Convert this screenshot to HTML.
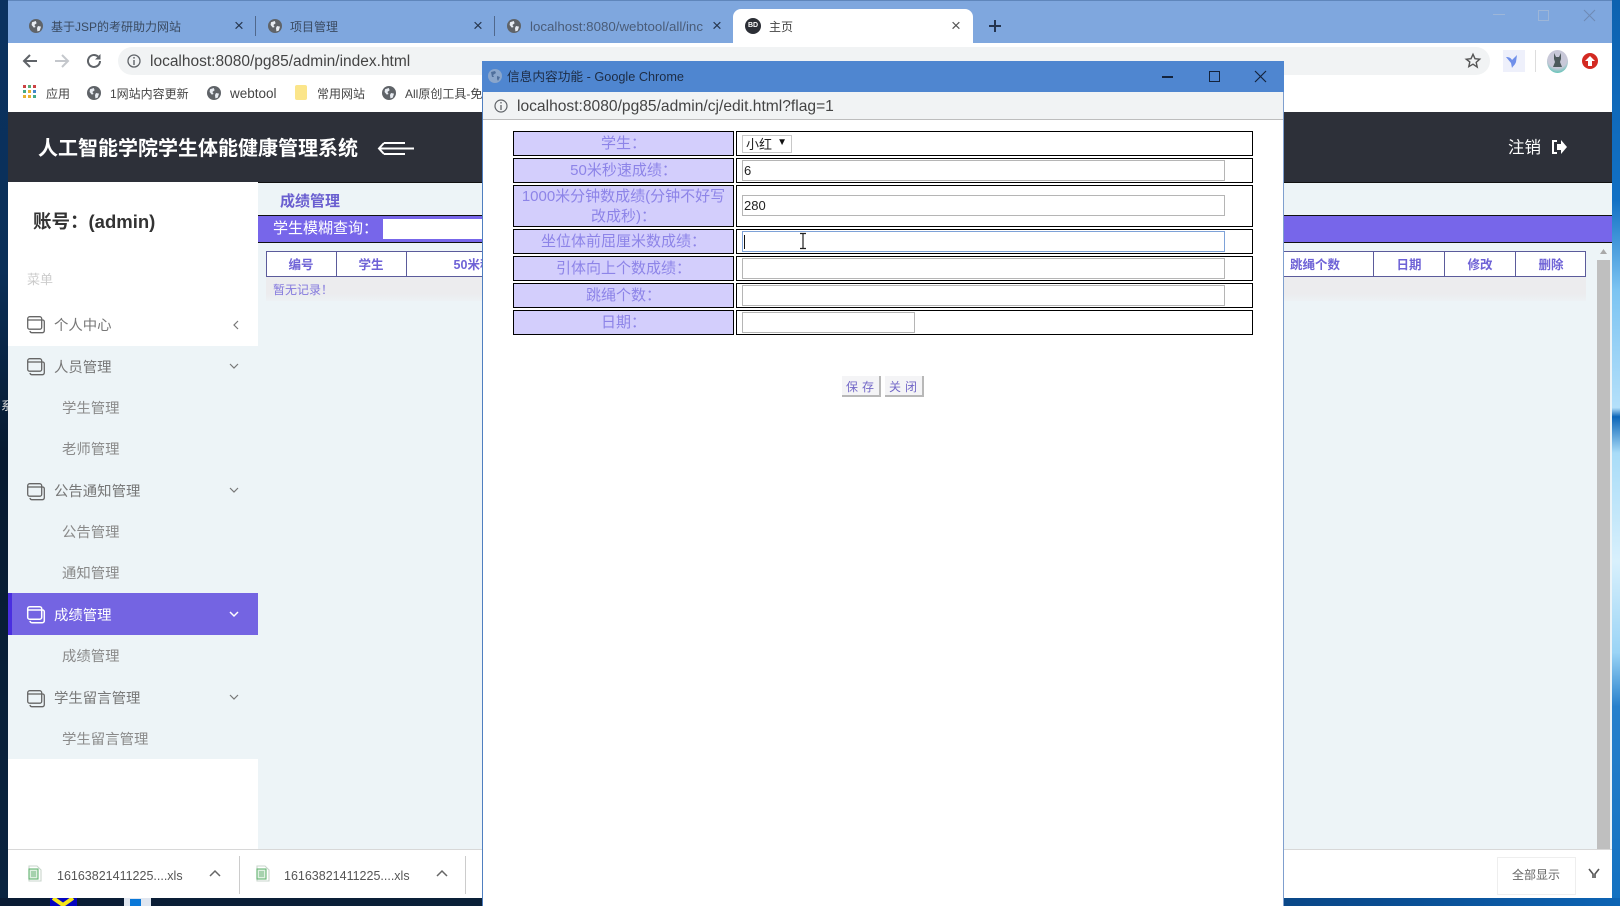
<!DOCTYPE html>
<html lang="zh"><head><meta charset="utf-8"><title>主页</title>
<style>
*{box-sizing:border-box}
html,body{margin:0;padding:0;width:1620px;height:906px;overflow:hidden;background:#0a2a50}
body{font-family:"Liberation Sans","Noto Sans CJK SC",sans-serif;position:relative}
#w{position:absolute;left:0;top:0;width:1620px;height:906px;filter:blur(.35px)}
.a,.t{position:absolute}
.t{white-space:nowrap;line-height:1}
svg{position:absolute;overflow:visible}
.tab{font-size:12px;color:#3a4a60}
.bm{font-size:12px;color:#444}
.m{left:54px;font-size:14.4px;color:#777}
.s{left:62px;font-size:14.4px;color:#8a8a8a}
.th{font-size:12.5px;font-weight:bold;color:#6e62d6;transform:translateX(-50%)}
.lb{position:absolute;left:513px;width:221px;background:#d3cefc;border:1.5px solid #000;color:#8d84e8;font-size:15px;text-align:center;display:flex;align-items:center;justify-content:center;line-height:20px;padding:1px 2px 0 2px}
.rc{position:absolute;left:736px;width:517px;background:#fff;border:1.5px solid #000}
.in{position:absolute;left:742px;width:483px;height:21px;background:#fff;border:1px solid #b5b5b5;font-size:13px;color:#222;padding:3px 0 0 1px;line-height:14px}
.dl{font-size:12.5px;color:#555}
.x{font-size:17px;color:#27374f}
</style></head><body><div id="w">
<svg width="0" height="0" style="position:absolute"><defs>
<g id="g"><circle cx="7" cy="7" r="7" fill="#5f6368"/><path d="M3 3.2 6.8 2 7.6 4.2 5.4 6 6.6 8 4.8 8.6 2.6 6ZM9 7l3 .6-1.2 4L8.4 12.4 8 9Z" fill="#e8ecf2"/></g>
<g id="mi" fill="none" stroke="#666" stroke-width="1.3"><rect x=".7" y=".7" width="14" height="12.5" rx="2"/><path d="M1 4h13.5"/><path d="M15 4h.6a1.7 1.7 0 0 1 1.7 1.7v9a2 2 0 0 1-2 2H5a2 2 0 0 1-2-1.8" /></g>
<g id="miw" fill="none" stroke="#fff" stroke-width="1.5"><rect x=".7" y=".7" width="14" height="12.5" rx="2"/><path d="M1 4h13.5"/><path d="M15 4h.6a1.7 1.7 0 0 1 1.7 1.7v9a2 2 0 0 1-2 2H5a2 2 0 0 1-2-1.8"/></g>
<g id="xls" fill="none" stroke="#6cb57a" stroke-width="1.1"><path d="M1 1h8l4 4v11H1Z" stroke="#c9d6cc"/><rect x="1" y="4" width="9" height="10" fill="#dff0e2" stroke="#65b473"/><path d="M3 7h5M3 9h5M3 11h5"/></g>
</defs></svg>

<!-- desktop edges -->
<div class="a" style="left:0;top:0;width:8px;height:906px;background:linear-gradient(180deg,#0b3260 0,#0a2f58 30%,#071a30 50%,#0a2440 100%)"></div>
<div class="a" style="left:1612px;top:0;width:8px;height:906px;background:linear-gradient(180deg,#0d62b0 0,#1170c4 22%,#7cc4f2 32%,#b4e0fa 45%,#0c66b8 46%,#a8dcf8 50%,#d8f0fc 62%,#9ad4f6 72%,#2680cc 78%,#1270c0 100%)"></div>
<div class="a" style="left:0;top:898px;width:1620px;height:8px;background:linear-gradient(90deg,#0a1c34,#0a2038 30%,#06294f 40%,#0a4c90 85%,#0d64b4)"></div>
<div class="a" style="left:50px;top:898px;width:27px;height:8px;background:#0505c0"></div>
<svg style="left:52px;top:898px" width="22" height="8"><path d="M1 0 11 7 21 0" fill="none" stroke="#f5e61a" stroke-width="4"/></svg>
<div class="a" style="left:124px;top:898px;width:27px;height:8px;background:#dfe6f0"></div>
<div class="a" style="left:130px;top:899px;width:11px;height:7px;background:#0a78d8"></div>

<!-- browser -->
<div class="a" style="left:8px;top:0;width:1604px;height:898px;background:#fff"></div>
<div class="a" style="left:8px;top:0;width:1604px;height:43px;background:#7fa7de;border-top:1px solid #5f86bb"></div>

<!-- tabs -->
<svg style="left:29px;top:19px" width="14" height="14"><use href="#g"/></svg>
<div class="t tab" style="left:51px;top:21px">基于JSP的考研助力网站</div>
<div class="t x" style="left:234px;top:17px">×</div>
<div class="a" style="left:255px;top:16px;width:1px;height:20px;background:#50688c"></div>
<svg style="left:268px;top:19px" width="14" height="14"><use href="#g"/></svg>
<div class="t tab" style="left:290px;top:21px">项目管理</div>
<div class="t x" style="left:473px;top:17px">×</div>
<div class="a" style="left:494px;top:16px;width:1px;height:20px;background:#50688c"></div>
<svg style="left:507px;top:19px" width="14" height="14"><use href="#g"/></svg>
<div class="t tab" style="left:530px;top:20px;width:175px;overflow:hidden;color:#4a5c78;font-size:13.3px">localhost:8080/webtool/all/inc</div>
<div class="t x" style="left:712px;top:17px">×</div>
<div class="a" style="left:733px;top:9px;width:240px;height:36px;background:#fff;border-radius:8px 8px 0 0"></div>
<div class="a" style="left:745px;top:18px;width:16px;height:16px;border-radius:50%;background:#2c2f36;color:#fff;font-size:7px;font-weight:bold;text-align:center;line-height:16px">BD</div>
<div class="t tab" style="left:769px;top:21px;color:#444">主页</div>
<div class="t x" style="left:951px;top:17px;color:#555">×</div>
<svg style="left:988px;top:19px" width="14" height="14"><path d="M7 1v12M1 7h12" stroke="#24344f" stroke-width="2"/></svg>
<!-- window controls -->
<div class="a" style="left:1493px;top:14px;width:12px;height:1px;background:#9db6d8"></div>
<div class="a" style="left:1538px;top:10px;width:11px;height:11px;border:1px solid #9db6d8"></div>
<svg style="left:1583px;top:9px" width="13" height="13"><path d="M1 1l11 11M12 1 1 12" stroke="#6f8ab4" stroke-width="1"/></svg>

<!-- toolbar -->
<div class="a" style="left:118px;top:47px;width:1372px;height:28px;background:#f1f3f4;border-radius:14px"></div>
<svg style="left:22px;top:53px" width="16" height="16"><path d="M15 8H2M8 2 2 8l6 6" fill="none" stroke="#5f6368" stroke-width="2"/></svg>
<svg style="left:54px;top:53px" width="16" height="16"><path d="M1 8h13M8 2l6 6-6 6" fill="none" stroke="#c4c7cc" stroke-width="2"/></svg>
<svg style="left:86px;top:53px" width="16" height="16"><path d="M14 8a6 6 0 1 1-2-4.500" fill="none" stroke="#5f6368" stroke-width="2"/><path d="M14.500 1v5.500H9Z" fill="#5f6368"/></svg>
<svg style="left:127px;top:54px" width="14" height="14"><circle cx="7" cy="7" r="6" fill="none" stroke="#5f6368" stroke-width="1.300"/><path d="M7 6v5M7 3v1.600" stroke="#5f6368" stroke-width="1.400"/></svg>
<div class="t" style="left:150px;top:54px;font-size:15.500px;color:#444">localhost:8080/pg85/admin/index.html</div>
<svg style="left:1465px;top:53px" width="16" height="15"><path d="M8 1.300l2 4.400 4.700.5-3.500 3.200 1 4.700L8 11.200 3.800 13.600l1-4.700L1.300 6.200 6 5.700Z" fill="none" stroke="#555" stroke-width="1.400"/></svg>
<div class="a" style="left:1503px;top:50px;width:22px;height:22px;background:#eef0fb"></div>
<svg style="left:1504px;top:52px" width="18" height="18"><path d="M2 5c3 0 5 1 6 3l5-5-1 7c-1 3-3 4-4 6l-1-5Z" fill="#6f8fea"/></svg>
<div class="a" style="left:1535px;top:50px;width:1px;height:22px;background:#ddd"></div>
<div class="a" style="left:1547px;top:50px;width:21px;height:23px;border-radius:50%;background:radial-gradient(circle at 50% 35%,#c8c8d8 0 55%,#57c4b4 85%)"></div>
<svg style="left:1552px;top:52px" width="11" height="18"><path d="M2 1l2 4h3l2-4v6L8 10l2 5H1l2-5-1-3Z" fill="#4d5a5c"/></svg>
<div class="a" style="left:1582px;top:53px;width:16px;height:16px;border-radius:50%;background:#d32a22"></div>
<svg style="left:1585px;top:56px" width="10" height="10"><path d="M5 0 10 5H7v5H3V5H0Z" fill="#fff"/></svg>

<!-- bookmarks -->
<svg style="left:23px;top:85px" width="13" height="14"><g fill="#c44"><rect width="3" height="3"/></g><rect x="5" width="3" height="3" fill="#5a7"/><rect x="10" width="3" height="3" fill="#c44"/><rect y="5" width="3" height="3" fill="#4a8"/><rect x="5" y="5" width="3" height="3" fill="#e8b030"/><rect x="10" y="5" width="3" height="3" fill="#48c"/><rect y="10" width="3" height="3" fill="#e8b030"/><rect x="5" y="10" width="3" height="3" fill="#e8b030"/><rect x="10" y="10" width="3" height="3" fill="#4a8"/></svg>
<div class="t bm" style="left:46px;top:88px">应用</div>
<svg style="left:87px;top:86px" width="14" height="14"><use href="#g"/></svg>
<div class="t bm" style="left:110px;top:88px">1网站内容更新</div>
<svg style="left:207px;top:86px" width="14" height="14"><use href="#g"/></svg>
<div class="t bm" style="left:230px;top:87px;font-size:13.500px">webtool</div>
<div class="a" style="left:295px;top:85px;width:12px;height:15px;background:#fbe58a;border-radius:2px"></div>
<div class="t bm" style="left:317px;top:88px">常用网站</div>
<svg style="left:382px;top:86px" width="14" height="14"><use href="#g"/></svg>
<div class="t bm" style="left:405px;top:88px">All原创工具-免</div>

<!-- header -->
<div class="a" style="left:8px;top:112px;width:1604px;height:70px;background:#2d3039"></div>
<div class="t" style="left:38px;top:139px;font-size:20px;font-weight:bold;color:#fff">人工智能学院学生体能健康管理系统</div>
<svg style="left:377px;top:140px" width="38" height="17"><path d="M7 3h21M2 8.500h35M7 14h21" stroke="#fff" stroke-width="2"/><path d="M7 3 2 8.500 7 14" fill="none" stroke="#fff" stroke-width="2"/></svg>
<div class="t" style="left:1508px;top:140px;font-size:16.500px;color:#fff">注销</div>
<svg style="left:1551px;top:140px" width="16" height="14"><path d="M6 1H2v12h4" fill="none" stroke="#fff" stroke-width="2"/><path d="M6 4h4V0l6 7-6 7v-4H6Z" fill="#fff"/></svg>

<!-- sidebar -->
<div class="t" style="left:33px;top:213px;font-size:18.500px;font-weight:bold;color:#333">账号：(admin)</div>
<div class="t" style="left:27px;top:273px;font-size:13px;color:#ccc">菜单</div>
<div class="a" style="left:8px;top:346px;width:252px;height:413px;background:#edf4f7"></div>
<div class="a" style="left:8px;top:593px;width:250px;height:42px;background:#7464e2"></div>
<div class="a" style="left:8px;top:593px;width:4px;height:42px;background:#4a2ee0"></div>

<svg style="left:27px;top:316px" width="18" height="18"><use href="#mi"/></svg>
<div class="t m" style="top:319px">个人中心</div>
<svg style="left:232px;top:320px" width="8" height="10"><path d="M6 1 2 5l4 4" fill="none" stroke="#777" stroke-width="1.200"/></svg>
<svg style="left:27px;top:358px" width="18" height="18"><use href="#mi"/></svg>
<div class="t m" style="top:361px">人员管理</div>
<svg style="left:229px;top:362px" width="10" height="8"><path d="M1 2l4 4 4-4" fill="none" stroke="#777" stroke-width="1.200"/></svg>
<div class="t s" style="top:402px">学生管理</div>
<div class="t s" style="top:443px">老师管理</div>
<svg style="left:27px;top:483px" width="18" height="18"><use href="#mi"/></svg>
<div class="t m" style="top:485px">公告通知管理</div>
<svg style="left:229px;top:486px" width="10" height="8"><path d="M1 2l4 4 4-4" fill="none" stroke="#777" stroke-width="1.200"/></svg>
<div class="t s" style="top:526px">公告管理</div>
<div class="t s" style="top:567px">通知管理</div>
<svg style="left:27px;top:606px" width="18" height="18"><use href="#miw"/></svg>
<div class="t m" style="top:609px;color:#fff">成绩管理</div>
<svg style="left:229px;top:610px" width="10" height="8"><path d="M1 2l4 4 4-4" fill="none" stroke="#fff" stroke-width="1.500"/></svg>
<div class="t s" style="top:650px">成绩管理</div>
<svg style="left:27px;top:690px" width="18" height="18"><use href="#mi"/></svg>
<div class="t m" style="top:692px">学生留言管理</div>
<svg style="left:229px;top:693px" width="10" height="8"><path d="M1 2l4 4 4-4" fill="none" stroke="#777" stroke-width="1.200"/></svg>
<div class="t s" style="top:733px">学生留言管理</div>

<!-- content -->
<div class="a" style="left:258px;top:182px;width:1354px;height:667px;background:#edf4f7;border-top:1px solid #111"></div>
<div class="t" style="left:280px;top:194px;font-size:15px;font-weight:bold;color:#6a5fd0">成绩管理</div>
<div class="a" style="left:258px;top:215px;width:1354px;height:28px;background:#7766ea;border-top:1px solid #111;border-bottom:1px solid #111"></div>
<div class="t" style="left:273px;top:221px;font-size:15px;color:#fff">学生模糊查询：</div>
<div class="a" style="left:383px;top:219px;width:110px;height:20px;background:#fff"></div>
<div class="a" style="left:266px;top:251px;width:1320px;height:26px;background:#fff;border:1px solid #5b5b9b"></div>
<div class="a" style="left:336px;top:251px;width:1px;height:26px;background:#5b5b9b"></div>
<div class="a" style="left:406px;top:251px;width:1px;height:26px;background:#5b5b9b"></div>
<div class="a" style="left:1373px;top:251px;width:1px;height:26px;background:#5b5b9b"></div>
<div class="a" style="left:1444px;top:251px;width:1px;height:26px;background:#5b5b9b"></div>
<div class="a" style="left:1515px;top:251px;width:1px;height:26px;background:#5b5b9b"></div>
<div class="t th" style="left:301px;top:259px">编号</div>
<div class="t th" style="left:371px;top:259px">学生</div>
<div class="t th" style="left:473px;top:259px">50米秒</div>
<div class="t th" style="left:1315px;top:259px">跳绳个数</div>
<div class="t th" style="left:1409px;top:259px">日期</div>
<div class="t th" style="left:1480px;top:259px">修改</div>
<div class="t th" style="left:1551px;top:259px">删除</div>
<div class="a" style="left:266px;top:277px;width:1320px;height:24px;background:linear-gradient(180deg,#ececee,#ececee 70%,#edf1f4)"></div>
<div class="t" style="left:273px;top:284px;font-size:12px;color:#8378dd">暂无记录！</div>
<!-- scrollbar -->
<div class="a" style="left:1597px;top:260px;width:13px;height:589px;background:#bfbfbf"></div>
<svg style="left:1599px;top:248px" width="9" height="7"><path d="M4.500 1 8 6H1Z" fill="#a9a9a9"/></svg>

<!-- download bar -->
<div class="a" style="left:8px;top:849px;width:1604px;height:49px;background:#fff;border-top:1px solid #d8d8d8"></div>
<svg style="left:28px;top:865px" width="14" height="17"><use href="#xls"/></svg>
<div class="t dl" style="left:57px;top:870px">16163821411225....xls</div>
<svg style="left:209px;top:870px" width="12" height="8"><path d="M1 6l5-5 5 5" fill="none" stroke="#666" stroke-width="1.500"/></svg>
<div class="a" style="left:239px;top:856px;width:1px;height:38px;background:#ccc"></div>
<svg style="left:256px;top:865px" width="14" height="17"><use href="#xls"/></svg>
<div class="t dl" style="left:284px;top:870px">16163821411225....xls</div>
<svg style="left:436px;top:870px" width="12" height="8"><path d="M1 6l5-5 5 5" fill="none" stroke="#666" stroke-width="1.500"/></svg>
<div class="a" style="left:465px;top:856px;width:1px;height:38px;background:#ccc"></div>
<div class="a" style="left:1497px;top:857px;width:79px;height:38px;background:#fff;border:1px solid #eee"></div>
<div class="t" style="left:1512px;top:869px;font-size:12px;color:#666">全部显示</div>
<svg style="left:1588px;top:868px" width="12" height="11"><path d="M1 1l4 5v4M11 1 7 6v4" fill="none" stroke="#555" stroke-width="1.600"/></svg>

<!-- popup -->
<div class="a" style="left:482px;top:61px;width:802px;height:845px;background:#fff;border-left:1px solid #4f7fc0;border-right:1px solid #7f9fce"></div>
<div class="a" style="left:482px;top:61px;width:802px;height:31px;background:#4f86d0"></div>
<svg style="left:488px;top:69px" width="14" height="14"><circle cx="7" cy="7" r="7" fill="#8aa6cc"/><path d="M3 3 7 2 8 4 5 6 6 8 4 8ZM9 7l3 1-2 4-1-2Z" fill="#4f6f9c"/></svg>
<div class="t" style="left:507px;top:71px;font-size:12.700px;color:#1d2c44">信息内容功能 - Google Chrome</div>
<div class="a" style="left:1162px;top:76px;width:11px;height:1.500px;background:#14233c"></div>
<div class="a" style="left:1209px;top:71px;width:11px;height:11px;border:1.500px solid #14233c"></div>
<svg style="left:1254px;top:70px" width="13" height="13"><path d="M1 1l11 11M12 1 1 12" stroke="#14233c" stroke-width="1.200"/></svg>
<div class="a" style="left:483px;top:92px;width:800px;height:28px;background:#f1f3f4;border-bottom:1.500px solid #bdbdbd"></div>
<svg style="left:494px;top:99px" width="14" height="14"><circle cx="7" cy="7" r="6" fill="none" stroke="#5f6368" stroke-width="1.200"/><path d="M7 6v5M7 3v1.500" stroke="#5f6368" stroke-width="1.300"/></svg>
<div class="t" style="left:517px;top:99px;font-size:15.600px;color:#444">localhost:8080/pg85/admin/cj/edit.html?flag=1</div>

<!-- form -->
<div class="lb" style="top:131px;height:25px">学生：</div><div class="rc" style="top:131px;height:25px"></div>
<div class="lb" style="top:158px;height:25px">50米秒速成绩：</div><div class="rc" style="top:158px;height:25px"></div>
<div class="lb" style="top:185px;height:42px">1000米分钟数成绩(分钟不好写改成秒)：</div><div class="rc" style="top:185px;height:42px"></div>
<div class="lb" style="top:229px;height:25px">坐位体前屈厘米数成绩：</div><div class="rc" style="top:229px;height:25px"></div>
<div class="lb" style="top:256px;height:25px">引体向上个数成绩：</div><div class="rc" style="top:256px;height:25px"></div>
<div class="lb" style="top:283px;height:25px">跳绳个数：</div><div class="rc" style="top:283px;height:25px"></div>
<div class="lb" style="top:310px;height:25px">日期：</div><div class="rc" style="top:310px;height:25px"></div>

<div class="a" style="left:742px;top:135px;width:50px;height:18px;border:1px solid #c8c8c8;background:#fff;font-size:13px;color:#222;line-height:17px;padding-left:3px">小红<span style="position:absolute;right:4px;top:-2px;font-size:10px;color:#111">▼</span></div>
<div class="in" style="top:160px">6</div>
<div class="in" style="top:195px">280</div>
<div class="in" style="top:231px;border:1.500px solid #7ea2d8"></div>
<div class="a" style="left:744px;top:235px;width:1px;height:14px;background:#111"></div>
<svg style="left:799px;top:233px" width="8" height="16"><path d="M1 .5h6M1 15.500h6M4 .5v15" stroke="#222" stroke-width="1.200" fill="none"/></svg>
<div class="in" style="top:258px"></div>
<div class="in" style="top:285px"></div>
<div class="in" style="top:312px;width:173px"></div>

<div class="a" style="left:842px;top:376px;width:39px;height:21px;background:#f4f4f6;border-right:2px solid #b8b8b8;border-bottom:2px solid #b8b8b8;font-size:12px;color:#7469c8;text-align:center;line-height:22px;letter-spacing:4px;padding-left:3px">保存</div>
<div class="a" style="left:885px;top:376px;width:39px;height:21px;background:#f4f4f6;border-right:2px solid #b8b8b8;border-bottom:2px solid #b8b8b8;font-size:12px;color:#7469c8;text-align:center;line-height:22px;letter-spacing:4px;padding-left:3px">关闭</div>

<div class="t" style="left:1px;top:400px;font-size:12px;color:#ddd;width:7px;overflow:hidden">系</div>
</div></body></html>
